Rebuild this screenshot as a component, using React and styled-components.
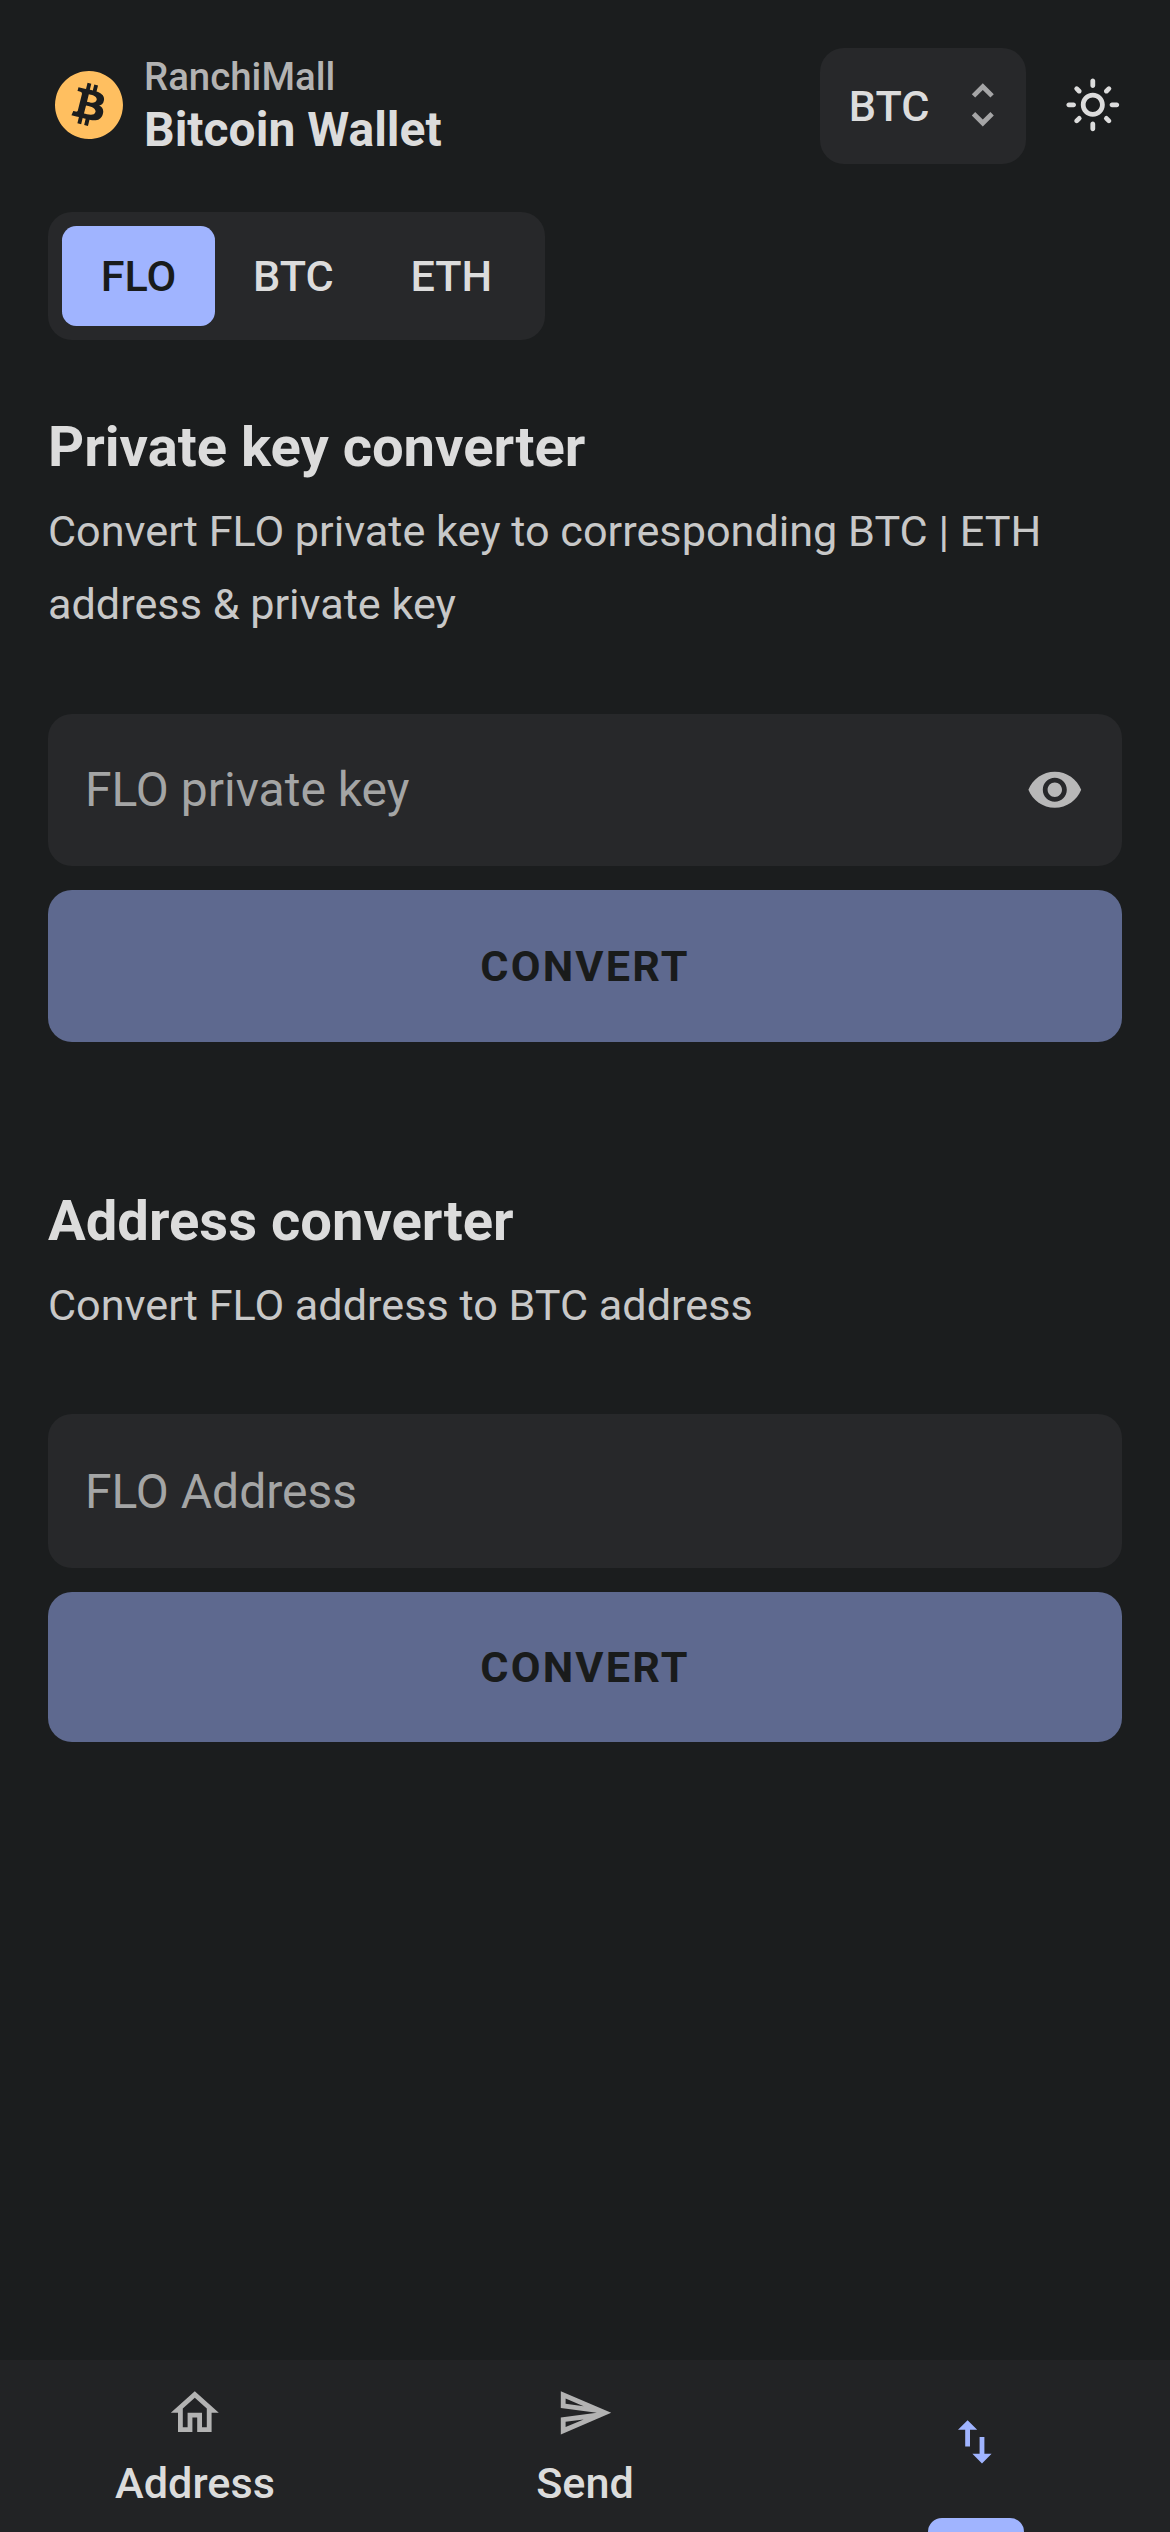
import React from 'react';
import styled, { createGlobalStyle } from 'styled-components';
import {
  MdOutlineLightMode,
  MdUnfoldMore,
  MdVisibility,
  MdOutlineHome,
  MdOutlineSend,
  MdSwapVert,
} from 'react-icons/md';

const GlobalStyle = createGlobalStyle`
  *, *::before, *::after { box-sizing: border-box; }
  html { font-size: 48px; }
  body { margin: 0; background: #1b1d1e; }
  body, button, input { font-family: Roboto, sans-serif; }
  button { border: 0; padding: 0; background: none; color: inherit; }
  h1, h2, p { margin: 0; }
`;

const Page = styled.div`
  display: flex;
  flex-direction: column;
  height: 2532px;
  overflow: hidden;
  background: #1b1d1e;
  color: #dcdcdc;
`;

const Header = styled.header`
  display: flex;
  align-items: center;
  height: 116px;
  margin: 48px 48px 0;
`;

const Logo = styled.svg`
  width: 68px;
  height: 68px;
  margin: 0 21px 2px 7px;
  flex-shrink: 0;
`;

const Brand = styled.div`
  display: flex;
  flex: 1;
  flex-direction: column;
  gap: 1px;
  padding-top: 1px;
`;

const Company = styled.span`
  color: #b3b3b3;
  font-size: 38.4px;
  font-weight: 500;
  line-height: 46px;
`;

const AppName = styled.h1`
  font-size: 48px;
  font-weight: 700;
  line-height: 58px;
`;

const Select = styled.button`
  display: flex;
  align-items: center;
  justify-content: space-between;
  width: 206px;
  height: 116px;
  padding: 1px 14px 0 28.8px;
  border-radius: 24px;
  background: #27282a;
  font-size: 43.2px;
  font-weight: 500;

  svg { color: #a5a5a6; margin-bottom: 3px; }
`;

const ThemeToggle = styled.button`
  display: flex;
  margin: 0 0 2px 38.4px;
  color: #dcdcdc;
`;

const Tabs = styled.div`
  display: flex;
  align-self: flex-start;
  height: 128px;
  margin: 48px 0 0 48px;
  padding: 14px 14.4px;
  border-radius: 24px;
  background: #27282a;
`;

const Tab = styled.button`
  padding: 1px 38.4px 0;
  border-radius: 14.4px;
  background: ${(p) => (p.$active ? '#a0b4ff' : 'transparent')};
  color: ${(p) => (p.$active ? '#191b1b' : '#dcdcdc')};
  font-size: 43.2px;
  font-weight: 500;
`;

const Main = styled.main`
  display: flex;
  flex: 1;
  flex-direction: column;
  gap: 145px;
  padding: 73px 48px 0;
`;

const Section = styled.section`
  display: flex;
  flex-direction: column;
`;

const Title = styled.h2`
  font-size: 56.16px;
  font-weight: 700;
  line-height: 68px;
`;

const Description = styled.p`
  margin: 14px 0 72px;
  color: #c8c8c8;
  font-size: 43.2px;
  line-height: 73.44px;
`;

const Field = styled.label`
  display: flex;
  align-items: center;
  height: ${(p) => p.$height}px;
  padding: 0 38.4px 0 37px;
  border-radius: 24px;
  background: #27282a;
  color: #b8b8b8;
`;

const Input = styled.input`
  flex: 1;
  min-width: 0;
  padding: 0;
  border: 0;
  outline: 0;
  background: none;
  color: #dcdcdc;
  font-size: 48px;

  &::placeholder { color: #a4a5a5; opacity: 1; }
`;

const Submit = styled.button`
  height: ${(p) => p.$height}px;
  margin-top: 24px;
  padding-top: 2px;
  border-radius: 24px;
  background: #5e698f;
  color: #191b1b;
  font-size: 43.2px;
  font-weight: 700;
  letter-spacing: 2.16px;
  text-transform: uppercase;
`;

const Nav = styled.nav`
  display: grid;
  grid-template-columns: repeat(3, 1fr);
  height: 172px;
  background: #222325;
`;

const NavItem = styled.button`
  display: flex;
  flex-direction: column;
  align-items: center;
  padding-top: ${(p) => (p.$active ? 53 : 24)}px;
  color: ${(p) => (p.$active ? '#a0b4ff' : '#b3b3b3')};
`;

const NavLabel = styled.span`
  margin-top: 16px;
  color: #dcdcdc;
  font-size: 43.2px;
  font-weight: 500;
  line-height: 51px;
`;

const Indicator = styled.span`
  width: 96px;
  height: 14px;
  margin: auto 0 0 2px;
  border-radius: 14px 14px 0 0;
  background: #a0b4ff;
`;

const ICON = 57.6;

const BitcoinLogo = () => (
  <Logo viewBox="0 0 24 24" fill="#ffbf60" aria-hidden="true">
    <path d="M23.638 14.904c-1.602 6.43-8.113 10.34-14.542 8.736C2.67 22.05-1.244 15.525.362 9.105 1.962 2.67 8.475-1.243 14.9.358c6.43 1.605 10.342 8.115 8.738 14.548v-.002zm-6.35-4.613c.24-1.59-.974-2.45-2.64-3.03l.54-2.153-1.315-.33-.525 2.107c-.345-.087-.705-.167-1.064-.25l.526-2.127-1.32-.33-.54 2.165c-.285-.067-.565-.132-.84-.2l-1.815-.45-.35 1.407s.975.225.955.236c.535.136.63.486.615.766l-1.477 5.92c-.075.166-.24.406-.614.314.015.02-.96-.24-.96-.24l-.66 1.51 1.71.426.93.242-.54 2.19 1.32.327.54-2.17c.36.1.705.19 1.05.273l-.51 2.154 1.32.33.545-2.19c2.24.427 3.93.257 4.64-1.774.57-1.637-.03-2.58-1.217-3.196.854-.193 1.5-.76 1.68-1.93h.01zm-3.01 4.22c-.404 1.64-3.157.75-4.05.53l.72-2.9c.896.23 3.757.67 3.33 2.37zm.41-4.24c-.37 1.49-2.662.735-3.405.55l.654-2.64c.744.18 3.137.524 2.75 2.084v.006z" />
  </Logo>
);

export default function App() {
  return (
    <Page>
      <GlobalStyle />
      <Header>
        <BitcoinLogo />
        <Brand>
          <Company>RanchiMall</Company>
          <AppName>Bitcoin Wallet</AppName>
        </Brand>
        <Select>
          BTC
          <MdUnfoldMore size={ICON} />
        </Select>
        <ThemeToggle aria-label="Toggle theme">
          <MdOutlineLightMode size={ICON} />
        </ThemeToggle>
      </Header>
      <Tabs>
        <Tab $active>FLO</Tab>
        <Tab>BTC</Tab>
        <Tab>ETH</Tab>
      </Tabs>
      <Main>
        <Section>
          <Title>Private key converter</Title>
          <Description>
            Convert FLO private key to corresponding BTC | ETH address &amp; private key
          </Description>
          <Field $height={152}>
            <Input placeholder="FLO private key" />
            <MdVisibility size={ICON} />
          </Field>
          <Submit $height={152}>Convert</Submit>
        </Section>
        <Section>
          <Title>Address converter</Title>
          <Description>Convert FLO address to BTC address</Description>
          <Field $height={153.6}>
            <Input placeholder="FLO Address" />
          </Field>
          <Submit $height={150}>Convert</Submit>
        </Section>
      </Main>
      <Nav>
        <NavItem>
          <MdOutlineHome size={ICON} />
          <NavLabel>Address</NavLabel>
        </NavItem>
        <NavItem>
          <MdOutlineSend size={ICON} />
          <NavLabel>Send</NavLabel>
        </NavItem>
        <NavItem $active aria-label="Convert">
          <MdSwapVert size={ICON} />
          <Indicator />
        </NavItem>
      </Nav>
    </Page>
  );
}
